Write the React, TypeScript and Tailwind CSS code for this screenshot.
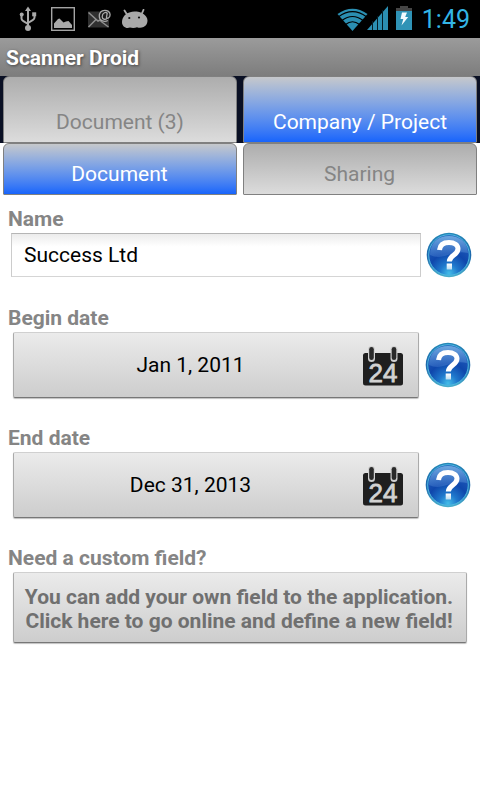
import React, { useState } from "react";

const UsbIcon: React.FC = () => (
  <svg width="18" height="26" viewBox="0 0 18 26" fill="none" stroke="#a9a9a9" strokeWidth="2">
    <path d="M9 4v17M2.5 9v3.500q0 1.500 1.500 2.300l5 3.200M15.500 8v3.500q0 1.500-1.500 2.300l-5 3.200" />
    <path d="M9 .5l3 4.500H6z" fill="#a9a9a9" stroke="none" />
    <circle cx="9" cy="22" r="3" fill="#a9a9a9" stroke="none" />
    <circle cx="2.700" cy="8.500" r="2" fill="#a9a9a9" stroke="none" />
    <rect x="13.200" y="6.300" width="4" height="4" fill="#a9a9a9" stroke="none" />
  </svg>
);

const PictureIcon: React.FC = () => (
  <svg width="24" height="24" viewBox="0 0 24 24">
    <rect x=".7" y=".7" width="22.600" height="22.600" fill="none" stroke="#a4a4a4" strokeWidth="1.400" />
    <path d="M3 21v-4.500l4-4.500 1.500-.5 4 4 2.500-1 2.500-.5 3.500 4v3z" fill="#a9a9a9" />
  </svg>
);

const MailIcon: React.FC = () => (
  <svg width="26" height="24" viewBox="0 0 26 24">
    <rect x="1" y="5.500" width="21" height="16" fill="#303030" />
    <path d="M1.500 6.500l9.500 8.500 3.500-1.500M1.500 21l7.500-7.500M13.500 15l8 6" fill="none" stroke="#8f8f8f" strokeWidth="1.500" />
    <circle cx="17.500" cy="9.500" r="5.500" fill="#1c1c1c" />
    <path d="M19.800 12.500c-1 1.200-4.600 1.400-4.600-1.700 0-4.400 4.300-5.200 5-3.500l-.7 3.700c-.2 2 3.600 1.800 3.600-2.200 0-6-10.800-6.500-10.800 1.500 0 5 5.500 6 8.500 4.200" fill="none" stroke="#a9a9a9" strokeWidth="1.300" />
  </svg>
);

const DroidIcon: React.FC = () => (
  <svg width="28" height="20" viewBox="0 0 28 20">
    <path d="M3.500 1.500l2.500 4M22.500.8l-2 4.500" stroke="#a9a9a9" strokeWidth="1.800" strokeLinecap="round" />
    <path d="M1 13c0-2.500 1-4.500 2.500-6.500C6 3.500 10.500 2.500 13.500 2.500s6.500.5 9 2.500c2 1.500 4 3.500 4 6.500 0 2.500-1 5-4 6.500-2 1-4.500 1-6.500.2-2 1-5 1-7 .3C5.500 20 1 18 1 13z" fill="#a9a9a9" />
    <circle cx="8.300" cy="9" r="1.100" fill="#111" />
    <circle cx="18" cy="8.500" r="1.100" fill="#111" />
  </svg>
);

const WifiIcon: React.FC = () => (
  <svg width="32" height="23" viewBox="0 0 32 23">
    <path d="M15.500 23L.5 6Q15.500-4.500 30.500 6z" fill="#2b8fb2" />
    <path d="M1.500 8.700Q15.500-1.300 29.500 8.700M5 12.500Q15.500 4.500 26 12.500M8.500 16.500Q15.500 11 22.500 16.500" fill="none" stroke="#000" strokeWidth="1.200" />
  </svg>
);

const SignalIcon: React.FC = () => (
  <svg width="21" height="24" viewBox="0 0 21 24">
    <path d="M0 24L21 0v24z" fill="#2b8fb2" />
    <path d="M5.500 15v9M10.500 10v14M15.500 4v20" stroke="#031b24" strokeWidth="1" />
  </svg>
);

const BatteryIcon: React.FC = () => (
  <svg width="16" height="24" viewBox="0 0 16 24">
    <path d="M0 5V2h4V0h8v2h4v3H0z" fill="#454545" />
    <rect y="5" width="16" height="19" fill="#2f93b6" />
    <path d="M6 6.500h5L9.200 11h3L5.500 19.500 7.300 13H4.500z" fill="#f3fbff" />
  </svg>
);

const CalendarIcon: React.FC = () => (
  <svg width="42" height="40" viewBox="0 0 42 40">
    <rect x="1" y="7" width="40" height="32.500" rx="2.500" fill="#1f1f1f" />
    <rect x="6" y="0" width="7" height="16" rx="3.500" fill="#d0d0d0" />
    <rect x="28.500" y="0" width="7" height="16" rx="3.500" fill="#d0d0d0" />
    <rect x="7.200" y="1" width="4.600" height="13" rx="2.300" fill="#2a2a2a" />
    <rect x="29.700" y="1" width="4.600" height="13" rx="2.300" fill="#2a2a2a" />
    <text x="21" y="35.500" textAnchor="middle" fontSize="26" fill="#d2d2d2" stroke="#d2d2d2" strokeWidth=".8" fontFamily="Liberation Sans, sans-serif">
      24
    </text>
  </svg>
);

const HelpIcon: React.FC = () => (
  <svg className="shrink-0" width="46" height="46" viewBox="0 0 46 46">
    <defs>
      <radialGradient id="helpBody" cx=".5" cy=".95" r=".9">
        <stop offset="0" stopColor="#43bce8" />
        <stop offset=".25" stopColor="#1f78cc" />
        <stop offset=".55" stopColor="#0f47ac" />
        <stop offset="1" stopColor="#2561bd" />
      </radialGradient>
      <linearGradient id="helpRim" x1="0" y1="0" x2="0" y2="1">
        <stop offset="0" stopColor="#2488b8" />
        <stop offset=".5" stopColor="#1d68ac" />
        <stop offset="1" stopColor="#4ab0cc" />
      </linearGradient>
      <linearGradient id="helpGloss" x1="0" y1="0" x2="0" y2="1">
        <stop offset="0" stopColor="#8fc6ee" stopOpacity=".7" />
        <stop offset="1" stopColor="#5c93dc" stopOpacity=".3" />
      </linearGradient>
      <linearGradient id="helpMark" x1="0" y1="0" x2="0" y2="1">
        <stop offset="0" stopColor="#fff" />
        <stop offset="1" stopColor="#b9dcf2" />
      </linearGradient>
    </defs>
    <circle cx="23" cy="23" r="22.300" fill="url(#helpRim)" />
    <circle cx="23" cy="23" r="20.300" fill="url(#helpBody)" stroke="#4fb8e0" strokeWidth="1" />
    <path d="M4 23C4 11 12 4 23 4s19 7 19 17c-8-2-14 0-20 2s-12 3-18 0z" fill="url(#helpGloss)" />
    <path d="M13.500 18c.5-5.500 4.500-7.500 9.500-7.500 5.500 0 9 2.500 9 6.300 0 6.500-8.700 6.500-8.700 12.700" fill="none" stroke="#fff" strokeWidth="5" />
    <rect x="20.700" y="31.500" width="5.300" height="6" fill="url(#helpMark)" />
  </svg>
);

interface TabProps {
  label: string;
  active: boolean;
  tall?: boolean;
  onClick: () => void;
}

const Tab: React.FC<TabProps> = ({ label, active, tall, onClick }) => (
  <button
    onClick={onClick}
    className={`flex-1 flex justify-center rounded-t-[6px] rounded-b-[1px] border border-[#808080] text-[21px] leading-6 bg-linear-to-b ${
      tall ? "h-[67px] pt-[33px]" : "h-[52px] pt-[18px] pr-px"
    } ${
      active
        ? "from-[#c6c8cb] to-[#1764fb] text-white"
        : "from-[#adadad] to-[#dcdcdc] text-[#858585]"
    }`}
  >
    {label}
  </button>
);

const FieldLabel: React.FC<{ text: string }> = ({ text }) => (
  <div className="h-6 pl-2 text-[21px] leading-6 font-bold text-[#858585]">{text}</div>
);

const buttonStyle =
  "rounded-[2px] border border-t-[#d0d0d0] border-x-[#aaa] border-b-[#777] bg-linear-to-b from-[#ebebeb] to-[#cdcdcd] shadow-[0_1px_1px_rgba(0,0,0,0.25)]";

const DateField: React.FC<{ label: string; value: string }> = ({ label, value }) => (
  <div className="h-[120px]">
    <FieldLabel text={label} />
    <div className="flex items-center pl-[13px] pt-[2px]">
      <button className={`w-[406px] h-[66px] flex items-center pr-[14px] pt-px ${buttonStyle}`}>
        <span className="flex-1 pl-[5px] pt-px text-[21px] text-center text-black">{value}</span>
        <CalendarIcon />
      </button>
      <div className="ml-[6px]">
        <HelpIcon />
      </div>
    </div>
  </div>
);

const App: React.FC = () => {
  const [mainTab, setMainTab] = useState(1);
  const [subTab, setSubTab] = useState(0);
  const [name, setName] = useState("Success Ltd");

  return (
    <div className="w-[480px] h-[800px] bg-white flex flex-col overflow-hidden font-[Roboto,sans-serif]">
      <div className="h-[38px] bg-black flex items-center justify-between pl-[19px] pr-[10px]">
        <div className="flex items-center">
          <UsbIcon />
          <div className="ml-[14px]">
            <PictureIcon />
          </div>
          <div className="ml-[12px] -mt-[3px]">
            <MailIcon />
          </div>
          <div className="ml-[8px] -mt-[1px]">
            <DroidIcon />
          </div>
        </div>
        <div className="flex items-center">
          <WifiIcon />
          <div className="-ml-[2px] -mt-[2px]">
            <SignalIcon />
          </div>
          <div className="ml-[8px] -mt-[2px]">
            <BatteryIcon />
          </div>
          <span className="ml-[10px] pt-px text-[25px] leading-none text-[#33b5e5]">1:49</span>
        </div>
      </div>
      <div className="h-[38px] flex items-center pl-[6px] pt-[3px] bg-linear-to-b from-[#9b9b9b] to-[#7d7d7d]">
        <h1 className="text-[21px] font-bold text-white [text-shadow:1px_1px_3px_#444]">Scanner Droid</h1>
      </div>
      <div className="flex gap-[6px] px-[3px] bg-[#0a1024]">
        <Tab label="Document (3)" active={mainTab === 0} tall onClick={() => setMainTab(0)} />
        <Tab label="Company / Project" active={mainTab === 1} tall onClick={() => setMainTab(1)} />
      </div>
      <div className="flex gap-[6px] px-[3px]">
        <Tab label="Document" active={subTab === 0} onClick={() => setSubTab(0)} />
        <Tab label="Sharing" active={subTab === 1} onClick={() => setSubTab(1)} />
      </div>
      <div className="pt-3">
        <div className="h-[99px]">
          <FieldLabel text="Name" />
          <div className="flex items-center pl-[11px] pt-px">
            <input
              value={name}
              onChange={(e) => setName(e.target.value)}
              className="w-[410px] h-[44px] px-[12px] text-[21px] text-black bg-linear-to-b from-[#ececec] to-white to-30% border border-t-[#b5b5b5] border-x-[#ccc] border-b-[#d5d5d5] outline-none"
            />
            <div className="ml-[5px]">
              <HelpIcon />
            </div>
          </div>
        </div>
        <DateField label="Begin date" value="Jan 1, 2011" />
        <DateField label="End date" value="Dec 31, 2013" />
        <FieldLabel text="Need a custom field?" />
        <div className="px-[13px] pt-[2px]">
          <button className={`w-[454px] h-[71px] pt-[2px] pr-[2px] text-[21px] leading-6 font-bold text-[#707070] whitespace-nowrap ${buttonStyle}`}>
            You can add your own field to the application.
            <br />
            Click here to go online and define a new field!
          </button>
        </div>
      </div>
    </div>
  );
};

export default App;
